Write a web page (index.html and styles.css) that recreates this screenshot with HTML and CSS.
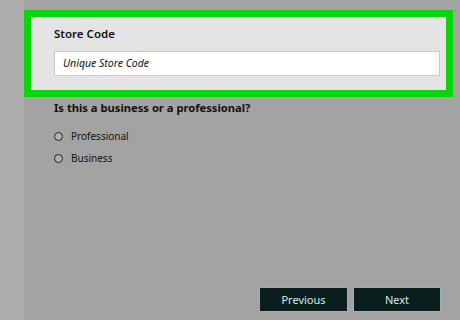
FILE: index.html
```html
<!DOCTYPE html>
<html>
<head>
<meta charset="utf-8">
<link rel="stylesheet" href="styles.css">
</head>
<body>
<div class="strip"></div>
<main class="main">
  <section class="box">
    <div class="label">Store Code</div>
    <div class="input">Unique Store Code</div>
  </section>
  <div class="question">Is this a business or a professional?</div>
  <div class="options">
    <label class="opt"><span class="radio"></span>Professional</label>
    <label class="opt"><span class="radio"></span>Business</label>
  </div>
  <div class="buttons">
    <button class="btn prev">Previous</button>
    <button class="btn next">Next</button>
  </div>
</main>
</body>
</html>
```
FILE: styles.css
```css
html, body { margin: 0; padding: 0; }
body {
  width: 460px;
  height: 320px;
  display: flex;
  font-family: "Noto Sans", "Open Sans", sans-serif;
  color: #111;
  overflow: hidden;
}
.strip { width: 24px; flex-shrink: 0; background: #acacac; }
.main {
  flex: 1;
  min-width: 0;
  background: #a3a3a3;
  display: flex;
  flex-direction: column;
  padding-top: 10px;
}
.box {
  width: 386px;
  border: 7px solid #0ad50a;
  background: #e4e4e4;
  padding: 9px 6px 14px 23px;
}
.label {
  font-size: 11.5px;
  font-weight: 600;
  line-height: 16px;
  margin-bottom: 9px;
}
.input {
  width: 376px;
  height: 23px;
  background: #fff;
  border: 1px solid #c9c9c9;
  font-size: 10.5px;
  font-style: italic;
  line-height: 23px;
  padding-left: 8px;
}
.question {
  padding-left: 30px;
  margin-top: 3px;
  font-size: 11.2px;
  font-weight: 700;
  line-height: 16px;
}
.options {
  padding-left: 30px;
  margin-top: 12px;
  display: flex;
  flex-direction: column;
  gap: 6px;
}
.opt {
  display: flex;
  align-items: center;
  gap: 8px;
  font-size: 10px;
  line-height: 16px;
}
.radio {
  width: 7px;
  height: 7px;
  border: 1px solid #222;
  border-radius: 50%;
  background: #b0b0b0;
}
.buttons {
  margin-top: auto;
  margin-bottom: 8px;
  display: flex;
  justify-content: flex-end;
  gap: 5px;
  padding-right: 19px;
}
.btn {
  height: 25px;
  background: #0b1e1e;
  border: 1px solid #93b5b0;
  color: #cdeeea;
  font-family: "Noto Sans", "Open Sans", sans-serif;
  font-size: 11px;
  padding: 0;
}
.prev { width: 89px; }
.next { width: 88px; }
```
